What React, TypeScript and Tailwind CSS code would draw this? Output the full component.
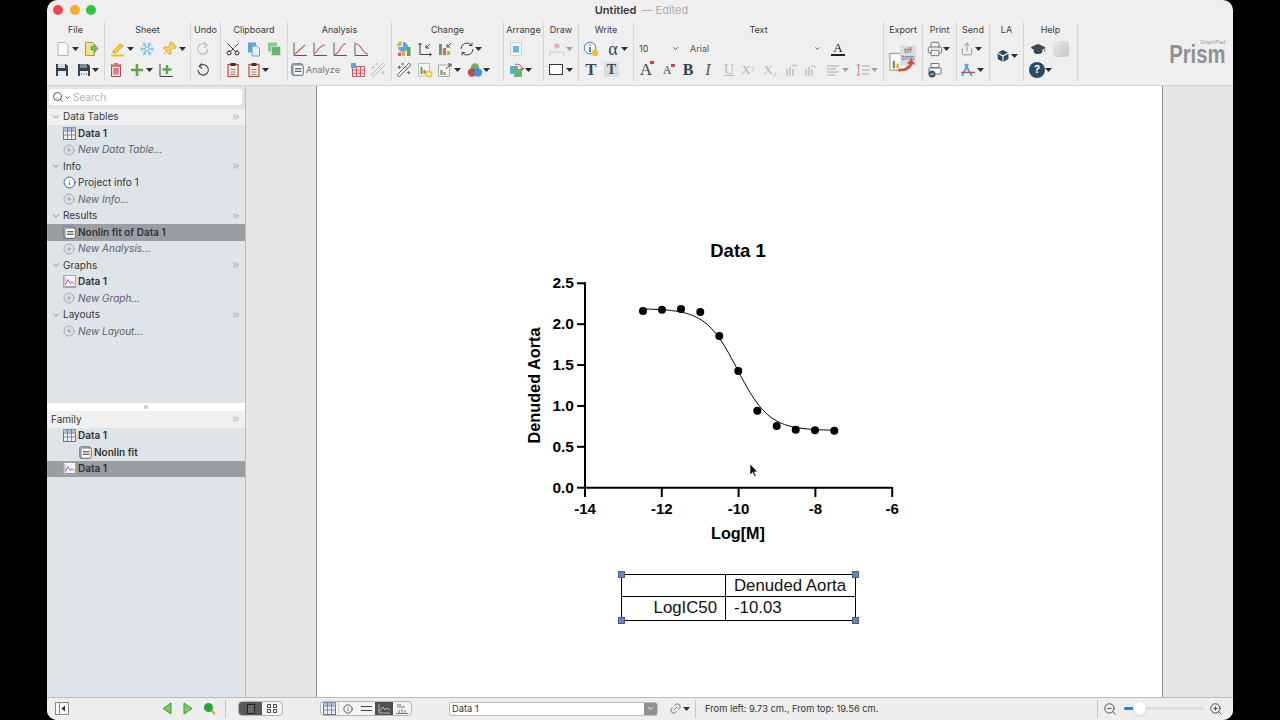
import { Fragment, type ReactNode } from 'react';
import {
  ChevronDown,
  ChevronsRight,
  CirclePlus,
  Info,
  Search,
  Scissors,
  Snowflake,
  Pin,
  Wand2,
  GraduationCap,
  Link2,
  ZoomIn,
  ZoomOut,
  Printer,
  Share,
  Box,
} from 'lucide-react';

const ui = 'font-["Inter","Liberation_Sans",sans-serif]';

function Svg({ children, className = '' }: { children: ReactNode; className?: string }) {
  return (
    <svg viewBox="0 0 16 16" fill="none" className={`w-4 h-4 shrink-0 ${className}`}>
      {children}
    </svg>
  );
}

function Caret({ className = '', light = false }: { className?: string; light?: boolean }) {
  return (
    <svg viewBox="0 0 7 4" className={`w-[7px] h-1 shrink-0 ${className}`}>
      <path d="M0 0h7L3.5 4z" fill={light ? '#a0a0a0' : '#2e2e2e'} />
    </svg>
  );
}

const DocIcon = ({ className }: { className?: string }) => (
  <Svg className={className}>
    <path d="M3 1.5h7l3 3v10H3z" fill="#f7f8fb" stroke="#a9b2c4" />
  </Svg>
);
const DocArrow = ({ className }: { className?: string }) => (
  <Svg className={className}>
    <path d="M2.5 1.5h7l2 2v11h-9z" fill="#f7e27c" stroke="#b49a35" />
    <path d="M8 5.5h3V3l4 4.5-4 4.5V9H8z" fill="#67bf6b" stroke="#3f9a4a" strokeWidth=".6" />
  </Svg>
);
const SaveIcon = ({ className, dots }: { className?: string; dots?: boolean }) => (
  <Svg className={className}>
    <path d="M2 2h10l2 2v10H2z" fill="#36444f" />
    <rect x="4" y="2" width="7" height="4" fill={dots ? '#7d8a94' : '#d6dde2'} />
    <rect x="4" y="9" width="8" height="5" fill="#e9edf0" />
    {dots && <path d="M5 12h1M7.5 12h1M10 12h1" stroke="#36444f" />}
  </Svg>
);
const Highlighter = ({ className }: { className?: string }) => (
  <Svg className={className}>
    <path d="M3 10l7-7 3 2-7 7H3z" fill="#f5cb3b" stroke="#b98d1c" strokeWidth=".7" />
    <path d="M1 14.5h13" stroke="#f0c419" strokeWidth="1.8" />
  </Svg>
);
const Trash = ({ className }: { className?: string }) => (
  <Svg className={className}>
    <path d="M3.5 4h9v10.500h-9z" fill="#f7d7d7" stroke="#b8434a" />
    <path d="M2.5 3h11M6 1.8h4M6.2 6v6.5M8 6v6.5M9.8 6v6.5" stroke="#b8434a" />
  </Svg>
);
const GreenPlus = ({ className }: { className?: string }) => (
  <Svg className={className}>
    <path d="M8 2v12M2 8h12" stroke="#5da548" strokeWidth="2.6" />
  </Svg>
);
const PlusTable = ({ className }: { className?: string }) => (
  <Svg className={className}>
    <path d="M2 2v12.5h13" stroke="#454545" />
    <path d="M9 3v9M4.5 7.5h9" stroke="#5da548" strokeWidth="2.4" />
  </Svg>
);
const Rotate = ({ className, gray }: { className?: string; gray?: boolean }) => (
  <Svg className={className}>
    <path d="M4.5 4.2A5.2 5.2 0 1 1 3 8" stroke={gray ? '#b8b8b8' : '#3f3f3f'} strokeWidth="1.1" />
    <path d="M7 1.5L4.200 4.200 7 6.5" stroke={gray ? '#b8b8b8' : '#3f3f3f'} strokeWidth="1.1" />
  </Svg>
);
const CopyIcon = ({ className }: { className?: string }) => (
  <Svg className={className}>
    <rect x="2" y="1.5" width="8" height="10" fill="#57a5e0" />
    <path d="M6 5h5l2.500 2.500V15H6z" fill="#e3edf6" stroke="#7e9cb6" />
  </Svg>
);
const PasteGreen = ({ className }: { className?: string }) => (
  <Svg className={className}>
    <rect x="2" y="1.5" width="9" height="9" fill="#8cc98f" />
    <rect x="5.5" y="5.5" width="9" height="9" fill="#69b56e" stroke="#d5ead6" strokeWidth=".7" />
  </Svg>
);
const Clipboard = ({ className }: { className?: string }) => (
  <Svg className={className}>
    <rect x="3" y="2.5" width="10" height="12" fill="#fbeee9" stroke="#c4492c" strokeWidth="1.2" />
    <rect x="5.5" y="1" width="5" height="3" fill="#333" />
    <path d="M5.5 7.5h5M5.5 10h5M5.5 12.3h5" stroke="#666" strokeWidth=".8" />
  </Svg>
);
const Plot = ({ d, className }: { d: string; className?: string }) => (
  <Svg className={className}>
    <path d="M2 1.5v13h13" stroke="#4c5a66" />
    <path d={d} stroke="#d1545c" strokeWidth="1.1" />
  </Svg>
);
const GridPink = ({ className }: { className?: string }) => (
  <Svg className={className}>
    <rect x="2.5" y="4.5" width="12" height="10" fill="#fbe9e9" stroke="#d35a60" />
    <path d="M2.5 8h12M2.5 11.3h12M6.5 4.500v10M10.5 4.500v10" stroke="#d35a60" />
    <rect x="1" y="1" width="5" height="5" fill="#58abd9" />
  </Svg>
);
const Bars = ({ className }: { className?: string }) => (
  <Svg className={className}>
    <rect x="2" y="3" width="3" height="11" fill="#5da548" />
    <rect x="6" y="7" width="3" height="7" fill="#d8654f" />
    <rect x="10" y="10" width="3" height="4" fill="#e4a93a" />
    <path d="M14 2l-4 4M10 3v3h3" stroke="#3f4c56" />
  </Svg>
);
const Arrows = ({ className }: { className?: string }) => (
  <Svg className={className}>
    <path d="M3 2.5v11h11" stroke="#3f4c56" strokeWidth="1.1" />
    <path d="M1.5 4L3 2l1.5 2M12.5 12L14.5 13.500 12.500 15" stroke="#3f4c56" />
    <path d="M13 3L9 7M9 4v3h3" stroke="#3f4c56" />
  </Svg>
);
const Pie = ({ className }: { className?: string }) => (
  <Svg className={className}>
    <path d="M7 1a5 5 0 1 1-5 5h5z" fill="#5da8df" />
    <path d="M1 5a4.500 4.500 0 0 1 4.500-4.500V5z" fill="#e6a83a" />
    <rect x="11" y="6" width="3.5" height="9" fill="#5da548" />
    <rect x="2" y="11.5" width="3" height="3.5" fill="#d8654f" />
    <rect x="6" y="10.5" width="3" height="4.5" fill="#e4a93a" />
  </Svg>
);
const Cycle = ({ className }: { className?: string }) => (
  <Svg className={className}>
    <path d="M2 8a6 6 0 0 1 10.500-4M14 8A6 6 0 0 1 3.500 12" stroke="#444" />
    <path d="M13 1.5v3h-3M3 14.5v-3h3" stroke="#444" />
  </Svg>
);
const BarsBadge = ({ className }: { className?: string }) => (
  <Svg className={className}>
    <rect x="1.5" y="1.5" width="11" height="12.5" fill="#f6f6f6" stroke="#bbb" />
    <rect x="3.5" y="5" width="2" height="7" fill="#5da548" />
    <rect x="6.5" y="8" width="2" height="4" fill="#d8654f" />
    <circle cx="12" cy="12" r="3.5" fill="#f0c23c" />
    <path d="M12 9.800v4.400M9.800 12h4.400" stroke="#fff" />
  </Svg>
);
const BarsExpand = ({ className }: { className?: string }) => (
  <Svg className={className}>
    <rect x="1.5" y="3" width="11" height="11.5" fill="#f6f6f6" stroke="#aaa" />
    <rect x="3.5" y="8" width="2" height="5" fill="#5da548" />
    <rect x="6.5" y="10" width="2" height="3" fill="#d8654f" />
    <path d="M9 7l5-5M11 2h3v3" stroke="#444" />
  </Svg>
);
const Venn = ({ className }: { className?: string }) => (
  <Svg className={className}>
    <circle cx="8" cy="5.5" r="4.2" fill="#6cb35f" />
    <circle cx="5" cy="10.5" r="4.2" fill="#b8433f" fillOpacity=".95" />
    <circle cx="11" cy="10.5" r="4.2" fill="#3f8fd6" fillOpacity=".95" />
  </Svg>
);
const Arrange = ({ className }: { className?: string }) => (
  <Svg className={className}>
    <rect x="2.5" y="1.5" width="11" height="13" fill="#f3f4f5" stroke="#cfd3d6" />
    <rect x="5" y="5" width="6" height="6.5" fill="#67b4e6" />
  </Svg>
);
const RotateLayers = ({ className }: { className?: string }) => (
  <Svg className={className}>
    <rect x="1" y="4" width="8" height="8" fill="#58abd9" />
    <rect x="5" y="7" width="8" height="8" fill="#63b878" />
    <path d="M6 2.500a5.500 5.500 0 0 1 7.500 5M13.500 8L15 6M13.500 8L11.500 6.500" stroke="#d0483f" />
  </Svg>
);
const DrawStar = ({ className }: { className?: string }) => (
  <Svg className={className}>
    <path d="M1 15v-4h14v4" stroke="#c9c9c9" />
    <path d="M8 2v6M5.2 3.500l5.600 3M10.800 3.500l-5.600 3" stroke="#e58f94" />
  </Svg>
);
const InfoBadge = ({ className }: { className?: string }) => (
  <Svg className={className}>
    <circle cx="7" cy="7" r="5.8" fill="#f8f9fb" stroke="#4b7cb3" />
    <path d="M7 6v4M6 10.300h2M7 3.600v1.200" stroke="#254d85" strokeWidth="1.3" />
    <circle cx="12" cy="12" r="3.2" fill="#f0c23c" />
  </Svg>
);
const ExportIcon = () => (
  <svg viewBox="0 0 30 30" className="w-[28px] h-[28px]">
    <rect x="1" y="10" width="18" height="18" fill="#fafafa" stroke="#8d8d8d" />
    <rect x="4" y="18" width="2.5" height="8" fill="#5da548" />
    <rect x="8" y="21" width="2.5" height="5" fill="#e4a93a" />
    <rect x="12" y="2" width="17" height="21" rx="1" fill="#d6dde3" />
    <text x="20.5" y="10" textAnchor="middle" fontSize="6.5" fill="#555">tiff</text>
    <text x="20.5" y="17" textAnchor="middle" fontSize="6.5" fill="#555">bmp</text>
    <path d="M10 28c8 0 13-3 14-8" stroke="#dd4a36" strokeWidth="3" fill="none" />
    <path d="M19 21l5-5 4 6z" fill="#dd4a36" />
  </svg>
);
const LaptopBadge = ({ className }: { className?: string }) => (
  <Svg className={className}>
    <path d="M4 1.5h8v4H4zM2 6h12v6H2z" fill="#fafafa" stroke="#777" />
    <circle cx="5" cy="12" r="3.5" fill="#35566f" />
    <path d="M3.5 12l1 1 2-2" stroke="#fff" />
  </Svg>
);
const AppStore = ({ className }: { className?: string }) => (
  <Svg className={className}>
    <path d="M8 2L2 14M5 2l7 12" stroke="#45a0e0" strokeWidth="1.7" />
    <path d="M1 10.500h14" stroke="#d6494a" strokeWidth="1.5" />
  </Svg>
);
const Help = ({ className }: { className?: string }) => (
  <div className={`w-4 h-4 rounded-full bg-[#2c4a63] text-white text-[11px] font-bold flex items-center justify-center leading-none ${className}`}>
    ?
  </div>
);

const GridIcon = () => (
  <svg viewBox="0 0 13 13" className="w-[13px] h-[13px] shrink-0">
    <rect x=".5" y=".5" width="12" height="12" fill="#eef0f2" stroke="#66778a" />
    <rect x=".5" y=".5" width="12" height="3" fill="#a9c0d8" />
    <path d="M.5 4h12M.5 8h12M4.500 .5v12M8.500 .5v12" stroke="#66778a" strokeWidth=".8" />
  </svg>
);
const ResultIcon = () => (
  <svg viewBox="0 0 13 13" className="w-[13px] h-[13px] shrink-0">
    <rect x=".7" y=".7" width="11" height="11.5" rx="1.5" fill="#c7d6e8" stroke="#5f7ea8" />
    <rect x="2" y="2" width="10.3" height="10.3" rx="1.5" fill="#fafafa" stroke="#555" strokeWidth=".8" />
    <path d="M4 5.800h6.500M4 8.300h6.500" stroke="#333" strokeWidth="1.1" />
  </svg>
);
const GraphIcon = () => (
  <svg viewBox="0 0 13 13" fill="none" className="w-[13px] h-[13px] shrink-0">
    <rect x=".5" y=".5" width="12" height="12" fill="#f7f7f9" stroke="#a7a7b5" />
    <path d="M2 1.500v10h10" stroke="#777" strokeWidth=".7" />
    <path d="M2.500 9.500L5 4.500 7.500 8.500 9 6.500 11.500 9" stroke="#a65cc4" />
  </svg>
);

function Group({
  label,
  width,
  row1,
  row2,
}: {
  label: string;
  width: string;
  row1?: ReactNode;
  row2?: ReactNode;
}) {
  return (
    <div className={`${width} shrink-0 h-[59px] flex flex-col border-r border-[#d6d6d6]`}>
      <div className="h-[16px] text-[9px] leading-[15px] text-[#3c3c3c] text-center whitespace-nowrap">{label}</div>
      <div className="h-[21px] flex items-center">{row1}</div>
      <div className="h-[21px] flex items-center">{row2}</div>
    </div>
  );
}

function BigA({ small }: { small?: boolean }) {
  return (
    <span className={`relative w-4 text-center leading-none text-[#3b4a56] ${small ? 'ml-[5px] text-[12px]' : 'ml-1 text-[17px]'}`}>
      A
      <span className="absolute right-0 top-0 w-[4px] h-[3px] bg-[#d6403c]" />
    </span>
  );
}

function Toolbar() {
  return (
    <div className="flex items-start h-[59px] mt-[2px]">
      <Group label="File" width="w-[58px]"
        row1={<><DocIcon className="ml-2" /><Caret className="ml-[1px]" /><DocArrow className="ml-1" /></>}
        row2={<><SaveIcon className="ml-[7px]" /><SaveIcon dots className="ml-[6px]" /><Caret /></>}
      />
      <Group label="Sheet" width="w-[86px]"
        row1={<><Highlighter className="ml-[5px]" /><Caret className="ml-[1px]" /><Snowflake className="w-4 h-4 ml-[5px] text-[#6cc3ea]" strokeWidth={1.6} /><Pin className="w-4 h-4 ml-[6px] rotate-45 text-[#c9a52c] fill-[#f2d75c]" strokeWidth={1.4} /><Caret className="ml-[2px]" /></>}
        row2={<><Trash className="ml-[3px]" /><GreenPlus className="ml-[5px]" /><Caret className="ml-[1px]" /><PlusTable className="ml-[5px]" /></>}
      />
      <Group label="Undo" width="w-[30px]"
        row1={<Rotate gray className="ml-1 -scale-x-100" />}
        row2={<Rotate className="ml-1" />}
      />
      <Group label="Clipboard" width="w-[67px]"
        row1={<><Scissors className="w-4 h-4 ml-1 text-[#333] -rotate-90" strokeWidth={1.5} /><CopyIcon className="ml-[5px]" /><PasteGreen className="ml-1" /></>}
        row2={<><Clipboard className="ml-1" /><Clipboard className="ml-[5px]" /><Caret /></>}
      />
      <Group label="Analysis" width="w-[104px]"
        row1={<><Plot d="M3 13L13 4" className="ml-1" /><Plot d="M3 12C6 11 6 5 13 4" className="ml-1" /><Plot d="M3 13C9 13 7 3 14 3" className="ml-1" /><Plot d="M3 3C9 3 8 12 15 13" className="ml-[5px]" /></>}
        row2={
          <>
            <div className="ml-[3px] w-[49px] flex items-center">
              <ResultIcon />
              <span className="ml-[2px] text-[9px] text-[#77797b]">Analyze</span>
            </div>
            <GridPink className="ml-[10px]" />
            <Wand2 className="w-4 h-4 ml-1 text-[#b9b9b9]" strokeWidth={1.4} />
          </>
        }
      />
      <Group label="Change" width="w-[112px]"
        row1={<><Pie className="ml-1" /><Arrows className="ml-[5px]" /><Bars className="ml-1" /><Cycle className="ml-[6px]" /><Caret /></>}
        row2={<><Wand2 className="w-4 h-4 ml-1 text-[#55606a]" strokeWidth={1.4} /><BarsBadge className="ml-[5px]" /><BarsExpand className="ml-1" /><Caret className="ml-[1px]" /><Venn className="ml-[6px]" /><Caret /></>}
      />
      <Group label="Arrange" width="w-[40px]"
        row1={<Arrange className="ml-1" />}
        row2={<><RotateLayers className="ml-[5px]" /><Caret /></>}
      />
      <Group label="Draw" width="w-[35px]"
        row1={<><DrawStar className="ml-[5px]" /><Caret light className="ml-[1px]" /></>}
        row2={<><div className="ml-[5px] w-[14px] h-[11px] border border-[#333] bg-white shrink-0 mr-[2px]" /><Caret className="ml-[1px]" /></>}
      />
      <Group label="Write" width="w-[55px]"
        row1={<><InfoBadge className="ml-1" /><span className="ml-[6px] w-4 text-center text-[18px] leading-none text-[#2c4a63] font-['Liberation_Serif',serif]">α</span><Caret /></>}
        row2={
          <>
            <span className="ml-1 w-4 text-center text-[17px] leading-none font-bold text-[#3b4a56] font-['Liberation_Serif',serif]">T</span>
            <span className="ml-[5px] w-[15px] h-[15px] bg-[#d9dee2] text-center text-[14px] leading-[15px] font-bold text-[#3b4a56] font-['Liberation_Serif',serif]">T</span>
          </>
        }
      />
      <Group label="Text" width="w-[250px]"
        row1={
          <>
            <span className="ml-[5px] w-3 text-[9px] text-[#444]">10</span>
            <ChevronDown className="w-[7px] h-[7px] ml-[21px] text-[#444]" strokeWidth={3} />
            <span className="ml-[11px] w-[22px] text-[9px] text-[#555]">Arial</span>
            <ChevronDown className="w-[7px] h-[7px] ml-[102px] text-[#444]" strokeWidth={3} />
            <div className="ml-[9px] w-4 h-4 shrink-0 flex flex-col items-center">
              <span className="text-[13px] leading-[13px] text-[#222] font-['Liberation_Serif',serif]">A</span>
              <span className="w-[14px] h-[2px] bg-[#222]" />
            </div>
          </>
        }
        row2={
          <div className="flex items-center font-['Liberation_Serif',serif]">
            <BigA />
            <BigA small />
            <span className="ml-[5px] w-4 text-center text-[16px] leading-none font-bold text-[#33414d]">B</span>
            <span className="ml-1 w-4 text-center text-[16px] leading-none italic text-[#4a5965]">I</span>
            <span className="ml-[5px] w-4 text-center text-[14px] leading-none underline text-[#b5bbc0]">U</span>
            <span className="ml-[3px] w-4 text-center text-[13px] leading-none text-[#b0b6bb]">X<sup className="text-[7px]">2</sup></span>
            <span className="ml-[6px] w-4 text-center text-[13px] leading-none text-[#b0b6bb]">X<sub className="text-[7px]">2</sub></span>
            <Svg className="ml-[6px]"><path d="M3 7v7M6 5v9M9 7v7" stroke="#bbb" strokeWidth="1.4" /><path d="M8 4a3 3 0 0 1 5 1" stroke="#e3a39f" /></Svg>
            <Svg className="ml-[3px]"><path d="M3 7v7M6 5v9M9 7v7" stroke="#bbb" strokeWidth="1.4" /><path d="M8 5a3 3 0 0 1 5 1" stroke="#e3a39f" /></Svg>
            <Svg className="ml-[6px]"><path d="M2 4h12M2 7h9M2 10h12M2 13h8" stroke="#aaa" /></Svg>
            <Caret light className="ml-[1px]" />
            <Svg className="ml-[6px]"><path d="M3.5 2v12M1.800 4l1.700-2 1.700 2M1.800 12l1.700 2 1.700-2" stroke="#df8d8d" /><path d="M7 4h8M7 8h8M7 12h8" stroke="#aaa" /></Svg>
            <Caret light />
          </div>
        }
      />
      <div className="w-[39px] shrink-0 h-[59px] flex flex-col items-center border-r border-[#d6d6d6]">
        <div className="h-[16px] text-[9px] leading-[15px] text-[#3c3c3c]">Export</div>
        <div className="mt-[6px]"><ExportIcon /></div>
      </div>
      <Group label="Print" width="w-[34px]"
        row1={<><Printer className="w-4 h-4 ml-1 text-[#666]" strokeWidth={1.3} /><Caret /></>}
        row2={<LaptopBadge className="ml-1" />}
      />
      <Group label="Send" width="w-[33px]"
        row1={<><Share className="w-[14px] h-[14px] ml-[3px] mr-[1px] text-[#777]" strokeWidth={1.3} /><Caret /></>}
        row2={<><AppStore className="ml-[3px]" /><Caret className="ml-[1px]" /></>}
      />
      <div className="w-[34px] shrink-0 h-[59px] flex flex-col border-r border-[#d6d6d6]">
        <div className="h-[16px] text-[9px] leading-[15px] text-[#3c3c3c] text-center">LA</div>
        <div className="flex items-center mt-[10px]">
          <Box className="w-4 h-4 ml-[5px] text-white fill-[#2c4a63]" strokeWidth={1.6} />
          <Caret />
        </div>
      </div>
      <Group label="Help" width="w-[54px]"
        row1={<><GraduationCap className="w-4 h-4 ml-[6px] text-[#3a4a58] fill-[#3a4a58]" strokeWidth={1} /><div className="ml-[7px] w-4 h-4 rounded-[4px] bg-gradient-to-br from-[#e9e9e9] to-[#c6c6c6] shrink-0" /></>}
        row2={<><Help className="ml-[5px]" /><Caret /></>}
      />
      <div className="ml-auto mr-[8px] mt-[17px] flex flex-col items-end font-['Liberation_Sans',sans-serif] text-[#8f9295]">
        <span className="text-[5.5px] leading-[6px] text-[#9a9a9a]">GraphPad</span>
        <span className="font-bold text-[25px] leading-[19px] scale-x-[0.81] origin-right">Prism</span>
      </div>
    </div>
  );
}

function Section({ label, light }: { label: string; light?: boolean }) {
  return (
    <div className={`h-[16.5px] flex items-center pl-[4px] pr-[4px] ${light ? 'bg-[#f0f0f0]' : ''}`}>
      <ChevronDown className="w-[10px] h-[10px] text-[#555]" strokeWidth={1.5} />
      <span className="ml-[2px] text-[#33383c]">{label}</span>
      <ChevronsRight className="ml-auto w-[10px] h-[10px] text-[#666]" strokeWidth={1.4} />
    </div>
  );
}

function Item({ icon, label, selected, indent, plain }: { icon: ReactNode; label: string; selected?: boolean; indent?: boolean; plain?: boolean }) {
  return (
    <div className={`h-[16.5px] flex items-center ${indent ? 'pl-[32px]' : 'pl-[16px]'} ${selected ? 'bg-[#9a9da1]' : ''}`}>
      {icon}
      <span className={`ml-[2px] text-[#2f3438] ${plain ? '' : 'font-semibold'}`}>{label}</span>
    </div>
  );
}

function NewItem({ label }: { label: string }) {
  return (
    <div className="h-[16.5px] flex items-center pl-[16px]">
      <CirclePlus className="w-[12px] h-[12px] text-[#6d7378]" strokeWidth={1} />
      <span className="ml-[3px] italic text-[#5c6267]">{label}</span>
    </div>
  );
}

function Sidebar() {
  return (
    <aside className="w-[199px] shrink-0 flex flex-col bg-[#dfe4e8] border-r border-[#b9bcbf] text-[10px]">
      <div className="h-[22px] bg-[#e4e4e4] flex items-center px-[2px] shrink-0">
        <div className="w-[193px] h-[16px] bg-white rounded-[3px] flex items-center pl-[3px]">
          <Search className="w-[12px] h-[12px] text-[#333]" strokeWidth={1.6} />
          <ChevronDown className="w-[7px] h-[7px] text-[#333]" strokeWidth={3} />
          <span className="ml-[2px] text-[#b4b4b4]">Search</span>
        </div>
      </div>
      <div className="h-[295px] shrink-0 pt-[0.5px]">
        <Section label="Data Tables" light />
        <Item icon={<GridIcon />} label="Data 1" />
        <NewItem label="New Data Table..." />
        <Section label="Info" />
        <Item icon={<Info className="w-[13px] h-[13px] text-[#24509a] fill-white" strokeWidth={1.6} />} label="Project info 1" plain />
        <NewItem label="New Info..." />
        <Section label="Results" />
        <Item icon={<ResultIcon />} label="Nonlin fit of Data 1" selected />
        <NewItem label="New Analysis..." />
        <Section label="Graphs" />
        <Item icon={<GraphIcon />} label="Data 1" />
        <NewItem label="New Graph..." />
        <Section label="Layouts" />
        <NewItem label="New Layout..." />
      </div>
      <div className="h-[8px] bg-white shrink-0 flex items-center justify-center">
        <span className="w-1 h-1 rounded-full bg-[#c4c4c4]" />
      </div>
      <div className="h-[16.5px] shrink-0 bg-[#f0f0f0] flex items-center pl-[4px] pr-[4px] text-[#33383c]">
        Family
        <ChevronsRight className="ml-auto w-[10px] h-[10px] text-[#666]" strokeWidth={1.4} />
      </div>
      <Item icon={<GridIcon />} label="Data 1" />
      <Item icon={<ResultIcon />} label="Nonlin fit" indent />
      <Item icon={<GraphIcon />} label="Data 1" selected />
    </aside>
  );
}

const xOf = (v: number) => 75 + (v + 14) * 38.4;
const yOf = (v: number) => 257.7 - 81.76 * v;

const points = [
  [133, 81], [152, 79.7], [171, 79], [190.3, 82], [209.3, 106], [228.3, 141],
  [247.3, 180.7], [266.7, 196], [285.7, 199.7], [305, 200.3], [324.3, 200.7],
];

function curve() {
  const parts: string[] = [];
  for (let x = -12.5; x <= -7.5; x += 0.05) {
    const y = 0.7 + 1.49 / (1 + Math.pow(10, (x + 10.03) * 1.05));
    parts.push(`${parts.length ? 'L' : 'M'}${xOf(x).toFixed(1)} ${yOf(y).toFixed(1)}`);
  }
  return parts.join('');
}

function Chart() {
  return (
    <svg viewBox="0 0 400 320" className="w-[400px] h-[320px] block ml-[193px] mt-[144px] font-['Liberation_Sans',sans-serif] font-bold">
      <text x="228" y="27" textAnchor="middle" fontSize="18.5" fill="#000">Data 1</text>
      <path d="M75 52.3V258.7M74 257.7H382.2" stroke="#000" strokeWidth="2" fill="none" />
      {[0, 0.5, 1, 1.5, 2, 2.5].map((v) => (
        <Fragment key={v}>
          <path d={`M67 ${yOf(v)}H75`} stroke="#000" strokeWidth="2" />
          <text x="64" y={yOf(v) + 5} textAnchor="end" fontSize="15.5" fill="#000">{v.toFixed(1)}</text>
        </Fragment>
      ))}
      {[-14, -12, -10, -8, -6].map((v) => (
        <Fragment key={v}>
          <path d={`M${xOf(v)} 257V267`} stroke="#000" strokeWidth="2" />
          <text x={xOf(v)} y="284" textAnchor="middle" fontSize="15" fill="#000">{v}</text>
        </Fragment>
      ))}
      <text x="228" y="309" textAnchor="middle" fontSize="16.2" fill="#000">Log[M]</text>
      <text transform="translate(30 155.5) rotate(-90)" textAnchor="middle" fontSize="16.3" fill="#000">Denuded Aorta</text>
      <path d={curve()} stroke="#000" strokeWidth="1" fill="none" />
      {points.map(([x, y]) => (
        <circle key={x} cx={x} cy={y} r="4" fill="#000" />
      ))}
      <path d="M240 234l0 11 2.6-2.4 2 4 1.6-.8-2-3.800 3.400-.3z" fill="#111" stroke="#fff" strokeWidth=".6" />
    </svg>
  );
}

function Handle({ className }: { className: string }) {
  return <span className={`absolute w-[7px] h-[7px] bg-[#6587c0] border border-[#4a5f85] ${className}`} />;
}

function ResultTable() {
  return (
    <div className="relative ml-[304px] mt-[24px] w-[235px] font-['Liberation_Sans',sans-serif] text-[16.8px] leading-[22px] text-[#111]">
      <div className="border border-black">
        <div className="flex h-[22px] border-b border-black">
          <div className="w-[104px] border-r border-black" />
          <div className="pl-[8px] whitespace-nowrap">Denuded Aorta</div>
        </div>
        <div className="flex h-[23px]">
          <div className="w-[104px] border-r border-black text-right pr-[8px]">LogIC50</div>
          <div className="pl-[8px]">-10.03</div>
        </div>
      </div>
      <Handle className="-left-[3px] -top-[3px]" />
      <Handle className="-right-[3px] -top-[3px]" />
      <Handle className="-left-[3px] -bottom-[3px]" />
      <Handle className="-right-[3px] -bottom-[3px]" />
    </div>
  );
}

function ViewSwitch({ children, className = '' }: { children: ReactNode; className?: string }) {
  return <div className={`flex h-[15px] rounded-[4px] border border-[#b5b5b5] bg-[#f4f4f4] overflow-hidden shrink-0 ${className}`}>{children}</div>;
}

function StatusBar() {
  return (
    <div className="h-[23px] shrink-0 bg-[#eeeeee] border-t border-[#bcbcbc] flex items-center pb-[1px] text-[9.3px] text-[#333]">
      <svg viewBox="0 0 14 13" className="w-[14px] h-[13px] ml-[8px] shrink-0">
        <rect x=".5" y=".5" width="13" height="12" fill="#f7f7f7" stroke="#888" />
        <path d="M4.500 .5v12" stroke="#888" />
        <path d="M10 3.500v6L6.500 6.500z" fill="#333" />
      </svg>
      <svg viewBox="0 0 10 13" className="w-[10px] h-[13px] ml-[93px] shrink-0"><path d="M9 1v11L1 6.500z" fill="#7dcb5b" stroke="#3f9a3a" /></svg>
      <svg viewBox="0 0 10 13" className="w-[10px] h-[13px] ml-[11px] shrink-0"><path d="M1 1v11l8-5.500z" fill="#7dcb5b" stroke="#3f9a3a" /></svg>
      <svg viewBox="0 0 13 13" className="w-[13px] h-[13px] ml-[10px] shrink-0">
        <path d="M8 8l4 4" stroke="#c9a24a" strokeWidth="2" />
        <circle cx="5.5" cy="5.5" r="4.5" fill="#23a639" />
      </svg>
      <div className="w-px h-[18px] bg-[#c4c4c4] ml-[9px]" />
      <ViewSwitch className="ml-[12px] w-[45px]">
        <div className="w-[23px] bg-[#585858] flex items-center justify-center">
          <span className="w-[8px] h-[10px] border border-[#222] bg-[#6b6b6b]" />
        </div>
        <div className="flex-1 grid grid-cols-2 gap-[1px] place-content-center justify-items-center px-[5px]">
          <span className="w-[4px] h-[4px] border border-[#555]" />
          <span className="w-[4px] h-[4px] border border-[#555]" />
          <span className="w-[4px] h-[4px] border border-[#555]" />
          <span className="w-[4px] h-[4px] border border-[#555]" />
        </div>
      </ViewSwitch>
      <ViewSwitch className="ml-[37px] w-[92px]">
        <div className="w-[18px] flex items-center justify-center border-r border-[#d0d0d0]"><GridIcon /></div>
        <div className="w-[18px] flex items-center justify-center"><Info className="w-[10px] h-[10px] text-[#444]" /></div>
        <div className="w-[18px] flex items-center justify-center">
          <span className="w-[11px] h-[5px] border-y border-[#444]" />
        </div>
        <div className="w-[18px] bg-[#4f4f4f] flex items-center justify-center">
          <svg viewBox="0 0 12 10" className="w-[12px] h-[10px]"><path d="M1 0v9h11M2 7l3-4 2 3 2-2 3 2" stroke="#bbb" fill="none" /></svg>
        </div>
        <div className="flex-1 flex items-center justify-center">
          <svg viewBox="0 0 12 10" className="w-[12px] h-[10px]"><path d="M1 1h4M1 3h8M3 9V6M6 9V5M9 9V6M0 9.500h12" stroke="#777" /></svg>
        </div>
      </ViewSwitch>
      <div className="ml-[37px] w-[209px] h-[14px] bg-white border border-[#bdbdbd] rounded-[3px] flex items-center pl-[2px] shrink-0 overflow-hidden">
        Data 1
        <div className="ml-auto w-[13px] h-full bg-[#8f8f8f] flex items-center justify-center">
          <ChevronDown className="w-[9px] h-[9px] text-white" strokeWidth={2.5} />
        </div>
      </div>
      <Link2 className="w-[13px] h-[13px] ml-[11px] text-[#666] -rotate-45" strokeWidth={1.6} />
      <Caret className="ml-[1px]" />
      <div className="w-px h-[18px] bg-[#c4c4c4] ml-[5px]" />
      <span className="ml-[9px] text-[#333] whitespace-nowrap">From left: 9.73 cm., From top: 19.56 cm.</span>
      <div className="ml-auto w-px h-[18px] bg-[#c4c4c4]" />
      <ZoomOut className="w-[14px] h-[14px] ml-[5px] text-[#444]" strokeWidth={1.6} />
      <div className="relative ml-[7px] w-[80px] h-[3px] bg-[#dcdcdc] rounded-full">
        <div className="w-[15px] h-full bg-[#2f7fdc] rounded-full" />
        <span className="absolute left-[9px] -top-[5px] w-[13px] h-[13px] rounded-full bg-white shadow-sm" />
      </div>
      <ZoomIn className="w-[14px] h-[14px] ml-[5px] mr-[10px] text-[#444]" strokeWidth={1.6} />
    </div>
  );
}

export default function App() {
  return (
    <div className="w-[1280px] h-[720px] bg-black overflow-hidden pl-[47px]">
      <div className={`w-[1186px] h-[720px] rounded-[10px] overflow-hidden bg-[#efefef] flex flex-col ${ui}`}>
        <div className="h-[86px] shrink-0 border-b border-[#d2d2d2]">
          <div className="relative h-[20px] flex items-center justify-center pl-[3px] pt-[1px]">
            <div className="absolute left-[6px] top-[5px] flex gap-[6.5px]">
              <span className="w-[10px] h-[10px] rounded-full bg-[#f0464a]" />
              <span className="w-[10px] h-[10px] rounded-full bg-[#f6ae2b]" />
              <span className="w-[10px] h-[10px] rounded-full bg-[#32c23f]" />
            </div>
            <span className="text-[11px] font-semibold text-[#3a3a3a]">Untitled</span>
            <span className="text-[11px] text-[#b0b0b0] ml-[5px]">— Edited</span>
          </div>
          <Toolbar />
        </div>
        <div className="flex-1 flex min-h-0">
          <Sidebar />
          <main className="flex-1 flex bg-[#e6e6e6] min-w-0">
            <div className="w-[847px] ml-[70px] bg-white border-x border-[#8e8e8e]">
              <Chart />
              <ResultTable />
            </div>
          </main>
        </div>
        <StatusBar />
      </div>
    </div>
  );
}
